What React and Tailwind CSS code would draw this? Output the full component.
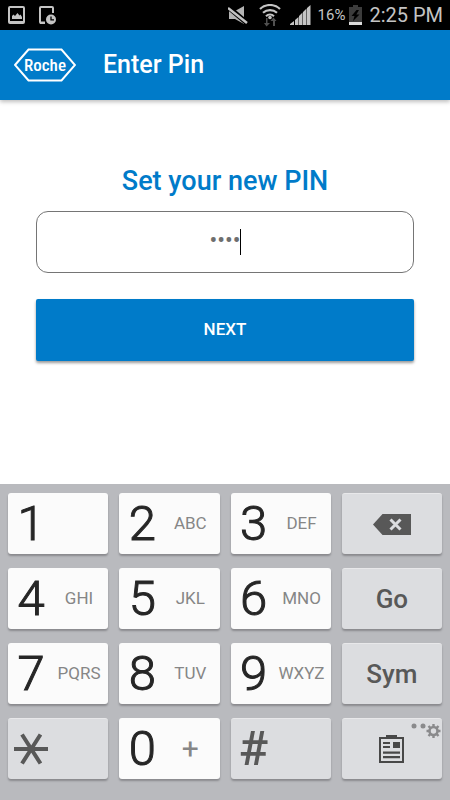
import React, { useState } from 'react';
import clsx from 'clsx';

const KEYS = [
  { label: '1' },
  { label: '2', letters: 'ABC' },
  { label: '3', letters: 'DEF' },
  { label: 'Delete', icon: 'backspace', muted: true },
  { label: '4', letters: 'GHI' },
  { label: '5', letters: 'JKL' },
  { label: '6', letters: 'MNO' },
  { label: 'Go', action: true, muted: true },
  { label: '7', letters: 'PQRS' },
  { label: '8', letters: 'TUV' },
  { label: '9', letters: 'WXYZ' },
  { label: 'Sym', action: true, muted: true },
  { label: 'Star', icon: 'star', muted: true },
  { label: '0', letters: '+' },
  { label: '#', muted: true },
  { label: 'Clipboard', icon: 'clipboard', muted: true },
];

const PictureIcon = () => (
  <svg className="w-[17px] h-[18px]" viewBox="0 0 17 18" fill="none">
    <rect x="1" y="1" width="15" height="16" rx="1" stroke="#c4c4c4" strokeWidth="2" />
    <path d="M1 15h15v2H1z" fill="#c4c4c4" />
    <path d="M4 13v-3l1.500-1.500L7 10l2.500-3 2 2.500 1-1L14 11v2z" fill="#c4c4c4" />
  </svg>
);

const PhoneClockIcon = () => (
  <svg className="w-[17px] h-[19px]" viewBox="0 0 17 19" fill="none">
    <path d="M6 17H2a1 1 0 0 1-1-1V2a1 1 0 0 1 1-1h11a1 1 0 0 1 1 1v5" stroke="#c4c4c4" strokeWidth="2" />
    <path d="M1 15.500h5v2.500H1z" fill="#c4c4c4" />
    <circle cx="12" cy="13.500" r="5" fill="#c4c4c4" />
    <path d="M12 10.500v3.300h3" stroke="#000" strokeWidth="1.300" />
  </svg>
);

const MuteIcon = () => (
  <svg className="w-5 h-5" viewBox="0 0 20 20" fill="none">
    <path d="M1 6h6l9-5v18l-9-5H1z" fill="#b4b4b4" />
    <path d="M0 2l19 16" stroke="#000" strokeWidth="5" />
    <path d="M0 3l19 15" stroke="#c4c4c4" strokeWidth="2.500" />
  </svg>
);

const WifiIcon = () => (
  <svg className="w-[22px] h-[23px]" viewBox="0 0 22 23" fill="none">
    <path d="M1 5a14.500 14.500 0 0 1 20 0M4 8.700a10.500 10.500 0 0 1 14 0M7 12.200a6 6 0 0 1 8 0" stroke="#c4c4c4" strokeWidth="2.200" />
    <circle cx="11" cy="13.500" r="1.800" fill="#c4c4c4" />
    <path d="M8.500 14v5H11l-3.500 3.500L5 19h2v-5zM14 22v-5h-2.500l3-3.500 3 3.500H16v5z" fill="#505050" />
  </svg>
);

const SignalIcon = () => (
  <svg className="w-[21px] h-5" viewBox="0 0 21 20" fill="#c4c4c4">
    <path d="M0 20v-1l4-3v4zM5 20v-5l3.500-3v8zM9 20v-9l3.500-3.500V20zM13 20V7l3.500-3.500V20zM17 20V3L20.500 0v20z" />
  </svg>
);

const BatteryIcon = () => (
  <svg className="w-[13px] h-5" viewBox="0 0 13 20">
    <path d="M4 0h5v2h4v18H0V2h4z" fill="#3c3c3c" />
    <path d="M0 17h13v3H0z" fill="#dcdcdc" />
    <path d="M7.500 5L2.500 11h3L4 16l6.500-6.500H7.300L10 5z" fill="#000" />
  </svg>
);

const BackspaceIcon = () => (
  <svg className="w-[38px] h-[21px]" viewBox="0 0 38 21">
    <path d="M0 10.500L9.500 0H38v21H9.500z" fill="#585858" />
    <path d="M17.500 5.500l10 10M27.500 5.500l-10 10" stroke="#dcdde0" strokeWidth="3" />
  </svg>
);

const StarIcon = () => (
  <svg className="w-[34px] h-8" viewBox="0 0 34 32">
    <path d="M0 16h34M8 1.500l18.500 29M26.500 1.500L8 30.500" stroke="#585858" strokeWidth="4" />
  </svg>
);

const ClipboardIcon = () => (
  <svg className="w-[25px] h-7" viewBox="0 0 25 28">
    <path d="M7 0h11v3H7z" fill="#484848" />
    <rect x="1" y="3" width="23" height="24" fill="none" stroke="#484848" strokeWidth="2" />
    <path d="M4 7h7v2H4zM4 11h7v2H4zM14 7h7v6h-7zM4 16.500h17v2.200H4zM4 21h17v2.200H4z" fill="#484848" />
  </svg>
);

const SettingsHint = () => (
  <svg className="absolute right-px top-[4px] w-[30px] h-4" viewBox="0 0 30 16">
    <circle cx="3" cy="3" r="2.500" fill="#8a8a8c" />
    <circle cx="12" cy="3" r="2.500" fill="#8a8a8c" />
    <g stroke="#8a8a8c" fill="none">
      <circle cx="22.500" cy="8" r="4" strokeWidth="2.600" />
      <path
        d="M22.500 1v2.500M22.500 12.500V15M15.500 8H18M27 8h2.500M17.500 3l1.800 1.800M25.700 11.200l1.800 1.800M27.500 3l-1.800 1.800M19.300 11.200L17.500 13"
        strokeWidth="2.400"
      />
    </g>
  </svg>
);

const RocheLogo = () => (
  <div className="relative flex h-[34px] w-[62px] items-center justify-center">
    <svg className="absolute inset-0 h-full w-full" viewBox="0 0 62 34" fill="none">
      <path d="M1 17L14.500 1.500h33L61 17 47.500 32.500h-33z" stroke="#fff" strokeWidth="2" />
    </svg>
    <span className="font-['Roboto_Condensed',Roboto,sans-serif] text-[17px] leading-5 font-medium">Roche</span>
  </div>
);

const StatusBar = () => (
  <div className="flex h-[30px] items-center justify-between bg-black pr-[7px] pl-2 text-[#c4c4c4]">
    <div className="flex items-center gap-[14px]">
      <PictureIcon />
      <PhoneClockIcon />
    </div>
    <div className="flex items-center">
      <MuteIcon />
      <div className="ml-[11px]">
        <WifiIcon />
      </div>
      <div className="ml-[9px]">
        <SignalIcon />
      </div>
      <span className="ml-[7px] text-[15px]">16%</span>
      <div className="ml-1">
        <BatteryIcon />
      </div>
      <span className="ml-[7px] text-xl">2:25 PM</span>
    </div>
  </div>
);

const Key = ({ label, letters, icon, action, muted, onPress }) => (
  <button
    type="button"
    aria-label={label}
    onClick={() => onPress(label)}
    className={clsx(
      'relative flex h-[61px] items-center rounded-[3px] shadow-[0_2px_2px_#8a8a8e]',
      muted ? 'border-t border-[#e8e8ea] bg-[#dcdde0] text-[#585858]' : 'bg-[#fbfbfb] text-[#262626]',
      (action || icon === 'backspace' || icon === 'clipboard') && 'justify-center',
      action && 'text-[26px] font-medium'
    )}
  >
    {icon === 'backspace' && <BackspaceIcon />}
    {icon === 'star' && (
      <span className="ml-[6px]">
        <StarIcon />
      </span>
    )}
    {icon === 'clipboard' && (
      <>
        <ClipboardIcon />
        <SettingsHint />
      </>
    )}
    {action && label}
    {!icon && !action && (
      <>
        <span
          className={clsx(
            'w-[46px] text-center text-[49px] leading-[60px]',
            muted ? 'font-medium' : 'font-light [-webkit-text-stroke:1px_#262626]'
          )}
        >
          {label}
        </span>
        {letters && (
          <span
            className={clsx(
              'w-[50px] text-center text-[#868686]',
              letters === '+' ? 'text-[30px]' : 'text-[17px]'
            )}
          >
            {letters}
          </span>
        )}
      </>
    )}
  </button>
);

const App = () => {
  const [pin, setPin] = useState('1234');

  const handleKey = (label) => {
    if (label === 'Delete') {
      setPin(pin.slice(0, -1));
    } else if (/^\d$/.test(label) && pin.length < 4) {
      setPin(pin + label);
    }
  };

  return (
    <div className="flex min-h-screen flex-col bg-white font-[Roboto,sans-serif]">
      <StatusBar />
      <header className="flex h-[70px] items-center gap-[27px] bg-[#007bc9] pl-[14px] text-white shadow-[0_2px_4px_#00000040]">
        <RocheLogo />
        <h1 className="text-[25px] leading-9 font-medium">Enter Pin</h1>
      </header>

      <main className="flex flex-1 flex-col px-9 pt-[61px]">
        <label htmlFor="pin" className="text-center text-[27px] leading-10 font-medium text-[#007bc9]">
          Set your new PIN
        </label>
        <div className="relative mt-[10px] flex items-center justify-center">
          <input
            id="pin"
            type="password"
            inputMode="numeric"
            value={pin}
            onChange={(e) => setPin(e.target.value)}
            className="h-[62px] w-full rounded-xl border border-[#757575] pb-1 text-center text-[23px] text-[#6e6e6e] caret-transparent outline-none"
          />
          <span className="absolute left-1/2 ml-[15px] h-[26px] w-px bg-black" />
        </div>
        <button
          type="button"
          className="mt-[26px] h-[62px] rounded-[2px] bg-[#007bc9] text-[17px] font-medium text-white shadow-[0_2px_3px_#00000066]"
        >
          NEXT
        </button>
      </main>

      <div className="grid grid-cols-4 gap-x-[11px] gap-y-[14px] bg-[#b9babe] px-2 pt-[9px] pb-[21px]">
        {KEYS.map((key) => (
          <Key key={key.label} {...key} onPress={handleKey} />
        ))}
      </div>
    </div>
  );
};

export default App;
